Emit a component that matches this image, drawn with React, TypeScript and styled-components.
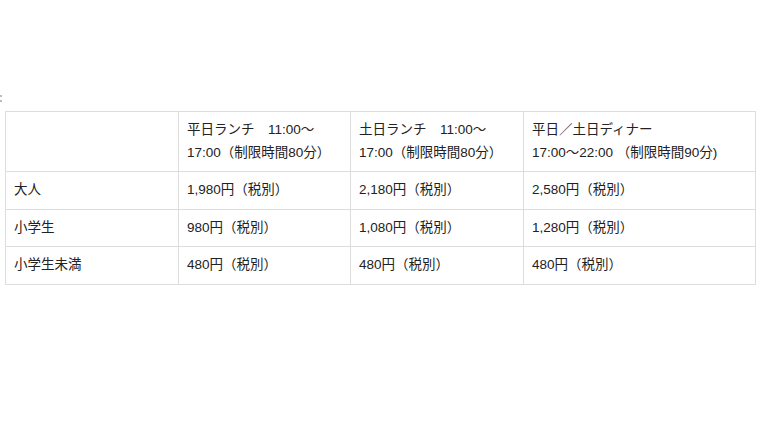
import { createGlobalStyle, styled } from 'styled-components';

const GlobalStyle = createGlobalStyle`
  html, body {
    margin: 0;
    padding: 0;
    background: #fff;
  }
  body {
    font-family: "Liberation Sans", "Noto Sans CJK JP", sans-serif;
    color: #222;
  }
`;

const Page = styled.div`
  width: 760px;
  height: 428px;
  padding: 94px 5px 0;
  box-sizing: border-box;
  overflow: hidden;
`;

// stray mark cut off at the left edge of the page
const EdgeMark = styled.div`
  width: 2px;
  height: 17px;
  position: relative;
  margin-left: -5px;

  &::before,
  &::after {
    content: '';
    position: absolute;
    left: 0;
    width: 2px;
    height: 2px;
    background: #bbb;
  }
  &::before {
    top: 1px;
  }
  &::after {
    top: 6px;
  }
`;

const PriceTable = styled.table`
  width: 750px;
  border-collapse: collapse;
  table-layout: fixed;
  font-size: 13.5px;
  line-height: 22.5px;
`;

const Col = styled.col<{ $width: number }>`
  width: ${({ $width }) => $width}px;
`;

const Cell = styled.td`
  border: 1px solid #ddd;
  padding: 7px 8px;
  vertical-align: middle;
  text-align: left;
  white-space: nowrap;
`;

const HeadCell = styled.th`
  border: 1px solid #ddd;
  padding: 7px 8px;
  vertical-align: middle;
  text-align: left;
  white-space: nowrap;
  font-weight: normal;
`;

const columns = [173, 172, 173, 232];

const headers = [
  ['平日ランチ　11:00〜', '17:00（制限時間80分）'],
  ['土日ランチ　11:00〜', '17:00（制限時間80分）'],
  ['平日／土日ディナー', '17:00〜22:00 （制限時間90分)'],
];

const rows = [
  { label: '大人', prices: ['1,980', '2,180', '2,580'] },
  { label: '小学生', prices: ['980', '1,080', '1,280'] },
  { label: '小学生未満', prices: ['480', '480', '480'] },
];

export default function App() {
  return (
    <>
      <GlobalStyle />
      <Page>
        <EdgeMark />
        <PriceTable>
          <colgroup>
            {columns.map((w, i) => (
              <Col key={i} $width={w} />
            ))}
          </colgroup>
          <thead>
            <tr>
              <HeadCell />
              {headers.map(([a, b]) => (
                <HeadCell key={a}>
                  {a}
                  <br />
                  {b}
                </HeadCell>
              ))}
            </tr>
          </thead>
          <tbody>
            {rows.map((row) => (
              <tr key={row.label}>
                <Cell>{row.label}</Cell>
                {row.prices.map((p, i) => (
                  <Cell key={i}>{p}円（税別）</Cell>
                ))}
              </tr>
            ))}
          </tbody>
        </PriceTable>
      </Page>
    </>
  );
}
